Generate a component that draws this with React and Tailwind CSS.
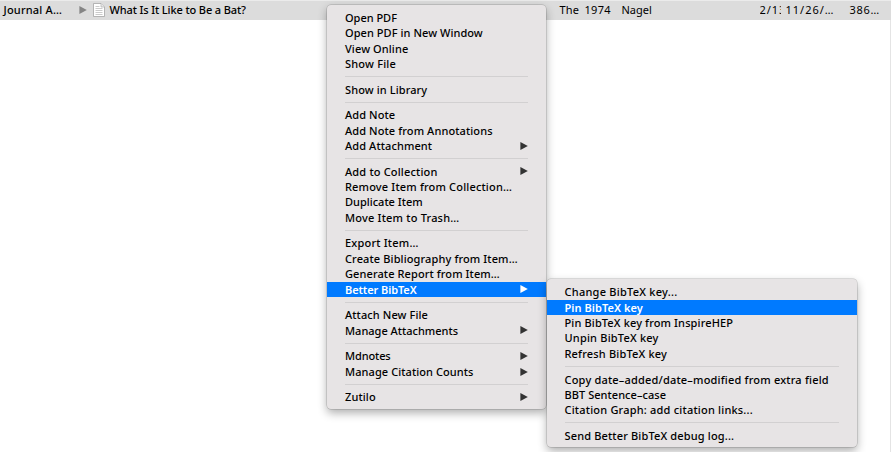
const SEP = null;

const mainItems = [
  { t: 'Open PDF', track: 'tracking-[-0.02px]' },
  { t: 'Open PDF in New Window', track: 'tracking-[0.06px]' },
  { t: 'View Online', track: 'tracking-[0.1px]' },
  { t: 'Show File', track: 'tracking-[0.2px]' },
  SEP,
  { t: 'Show in Library', track: 'tracking-[0.1px]' },
  SEP,
  { t: 'Add Note', track: 'tracking-[0.1px]' },
  { t: 'Add Note from Annotations', track: 'tracking-[0.1px]' },
  { t: 'Add Attachment', sub: true, track: 'tracking-[0.1px]' },
  SEP,
  { t: 'Add to Collection', sub: true, track: 'tracking-[0.17px]' },
  { t: 'Remove Item from Collection…', track: 'tracking-[0.17px]' },
  { t: 'Duplicate Item', track: 'tracking-[0px]' },
  { t: 'Move Item to Trash…', track: 'tracking-[0.2px]' },
  SEP,
  { t: 'Export Item…', track: 'tracking-[0.2px]' },
  { t: 'Create Bibliography from Item…', track: 'tracking-[0.12px]' },
  { t: 'Generate Report from Item…', track: 'tracking-[0.1px]' },
  { t: 'Better BibTeX', sub: true, active: true, track: 'tracking-[-0.1px]' },
  SEP,
  { t: 'Attach New File', track: 'tracking-[0.1px]' },
  { t: 'Manage Attachments', sub: true, track: 'tracking-[0px]' },
  SEP,
  { t: 'Mdnotes', sub: true, track: 'tracking-[-0.12px]' },
  { t: 'Manage Citation Counts', sub: true, track: 'tracking-[0.08px]' },
  SEP,
  { t: 'Zutilo', sub: true, track: 'tracking-[0.12px]' },
];

const subItems = [
  { t: 'Change BibTeX key...', track: 'tracking-[0.25px]' },
  { t: 'Pin BibTeX key', active: true, track: 'tracking-[0.06px]' },
  { t: 'Pin BibTeX key from InspireHEP', track: 'tracking-[0.13px]' },
  { t: 'Unpin BibTeX key', track: 'tracking-[0.2px]' },
  { t: 'Refresh BibTeX key', track: 'tracking-[0.17px]' },
  SEP,
  { t: 'Copy date–added/date–modified from extra field', track: 'tracking-[0.19px]' },
  { t: 'BBT Sentence–case', track: 'tracking-[0.05px]' },
  { t: 'Citation Graph: add citation links...', track: 'tracking-[0.2px]' },
  SEP,
  { t: 'Send Better BibTeX debug log...', track: 'tracking-[0.15px]' },
];

function Arrow({ className }) {
  return (
    <svg viewBox="0 0 8 8" className={`h-2 w-2 shrink-0 fill-current ${className}`}>
      <path d="M0.4 0 L7.8 4 L0.4 8 Z" />
    </svg>
  );
}

function Menu({ items, className }) {
  return (
    <div className={`absolute rounded-[4px] bg-[#e7e4e5] shadow-[0_0_0_0.5px_rgba(0,0,0,0.22),0_4px_10px_rgba(0,0,0,0.32)] ${className}`}>
      {items.map((item, i) =>
        item === SEP ? (
          <div key={i} className="flex h-[10.25px] items-center px-[18px]">
            <div className="h-px w-full bg-[#d2d0d1]" />
          </div>
        ) : (
          <div
            key={i}
            className={`flex h-[15.4px] items-center justify-between px-[18px] ${
              item.active ? 'bg-[#007aff] font-semibold text-white' : 'font-medium text-black'
            }`}
          >
            <span className={`pb-[0.6px] ${item.track}`}>{item.t}</span>
            {item.sub && <Arrow className={item.active ? 'text-white' : 'text-[#333]'} />}
          </div>
        )
      )}
    </div>
  );
}

function DocIcon() {
  return (
    <svg viewBox="0 0 12 14" className="ml-[6px] h-[14px] w-3 shrink-0">
      <path d="M0.5 0.5 H8 L11.5 4 V13.5 H0.5 Z" fill="#fff" stroke="#a5a5a5" strokeWidth="0.8" />
      <path d="M8 0.5 V4 H11.5" fill="#e8e8e8" stroke="#b0b0b0" strokeWidth="0.7" />
      <path d="M2.5 3.5 H6.5 M2.5 5.5 H9.5 M2.5 7.5 H9.5 M2.5 9.5 H9.5 M2.5 11.5 H9.5" stroke="#b5b5b5" strokeWidth="0.7" />
    </svg>
  );
}

export default function App() {
  return (
    <div className="relative h-[452px] w-[891px] overflow-hidden bg-white font-['Noto_Sans',sans-serif] text-[11px] leading-[15px] whitespace-nowrap text-black">
      <div className="flex h-5 items-center border-t border-[#ebebeb] bg-[#dcdcdc] pb-[2px] tracking-[0.2px]">
        <div className="w-[75px] pl-[3.5px] font-medium">Journal A…</div>
        <Arrow className="ml-[3.5px] text-[#858585]" />
        <DocIcon />
        <div className="ml-[5px] w-[450px] font-medium tracking-[-0.12px]">What Is It Like to Be a Bat?</div>
        <div className="w-[25px]">The</div>
        <div className="w-[37px] tracking-[0.3px]">1974</div>
        <div className="w-[138px] tracking-[0px]">Nagel</div>
        <div className="w-[21px] overflow-hidden tracking-[0.9px]">2/13</div>
        <div className="ml-[5px] w-[64px] tracking-[1px]">11/26/…</div>
        <div className="tracking-[0.7px]">386…</div>
      </div>
      <div className="ml-auto h-[432px] w-px bg-[#e4e4e4]" />
      <Menu items={mainItems} className="top-[5px] left-[327px] h-[404px] w-[219px] pt-[4.9px]" />
      <Menu items={subItems} className="top-[279px] left-[546.5px] h-[168px] w-[310.5px] pt-[5.4px]" />
    </div>
  );
}
